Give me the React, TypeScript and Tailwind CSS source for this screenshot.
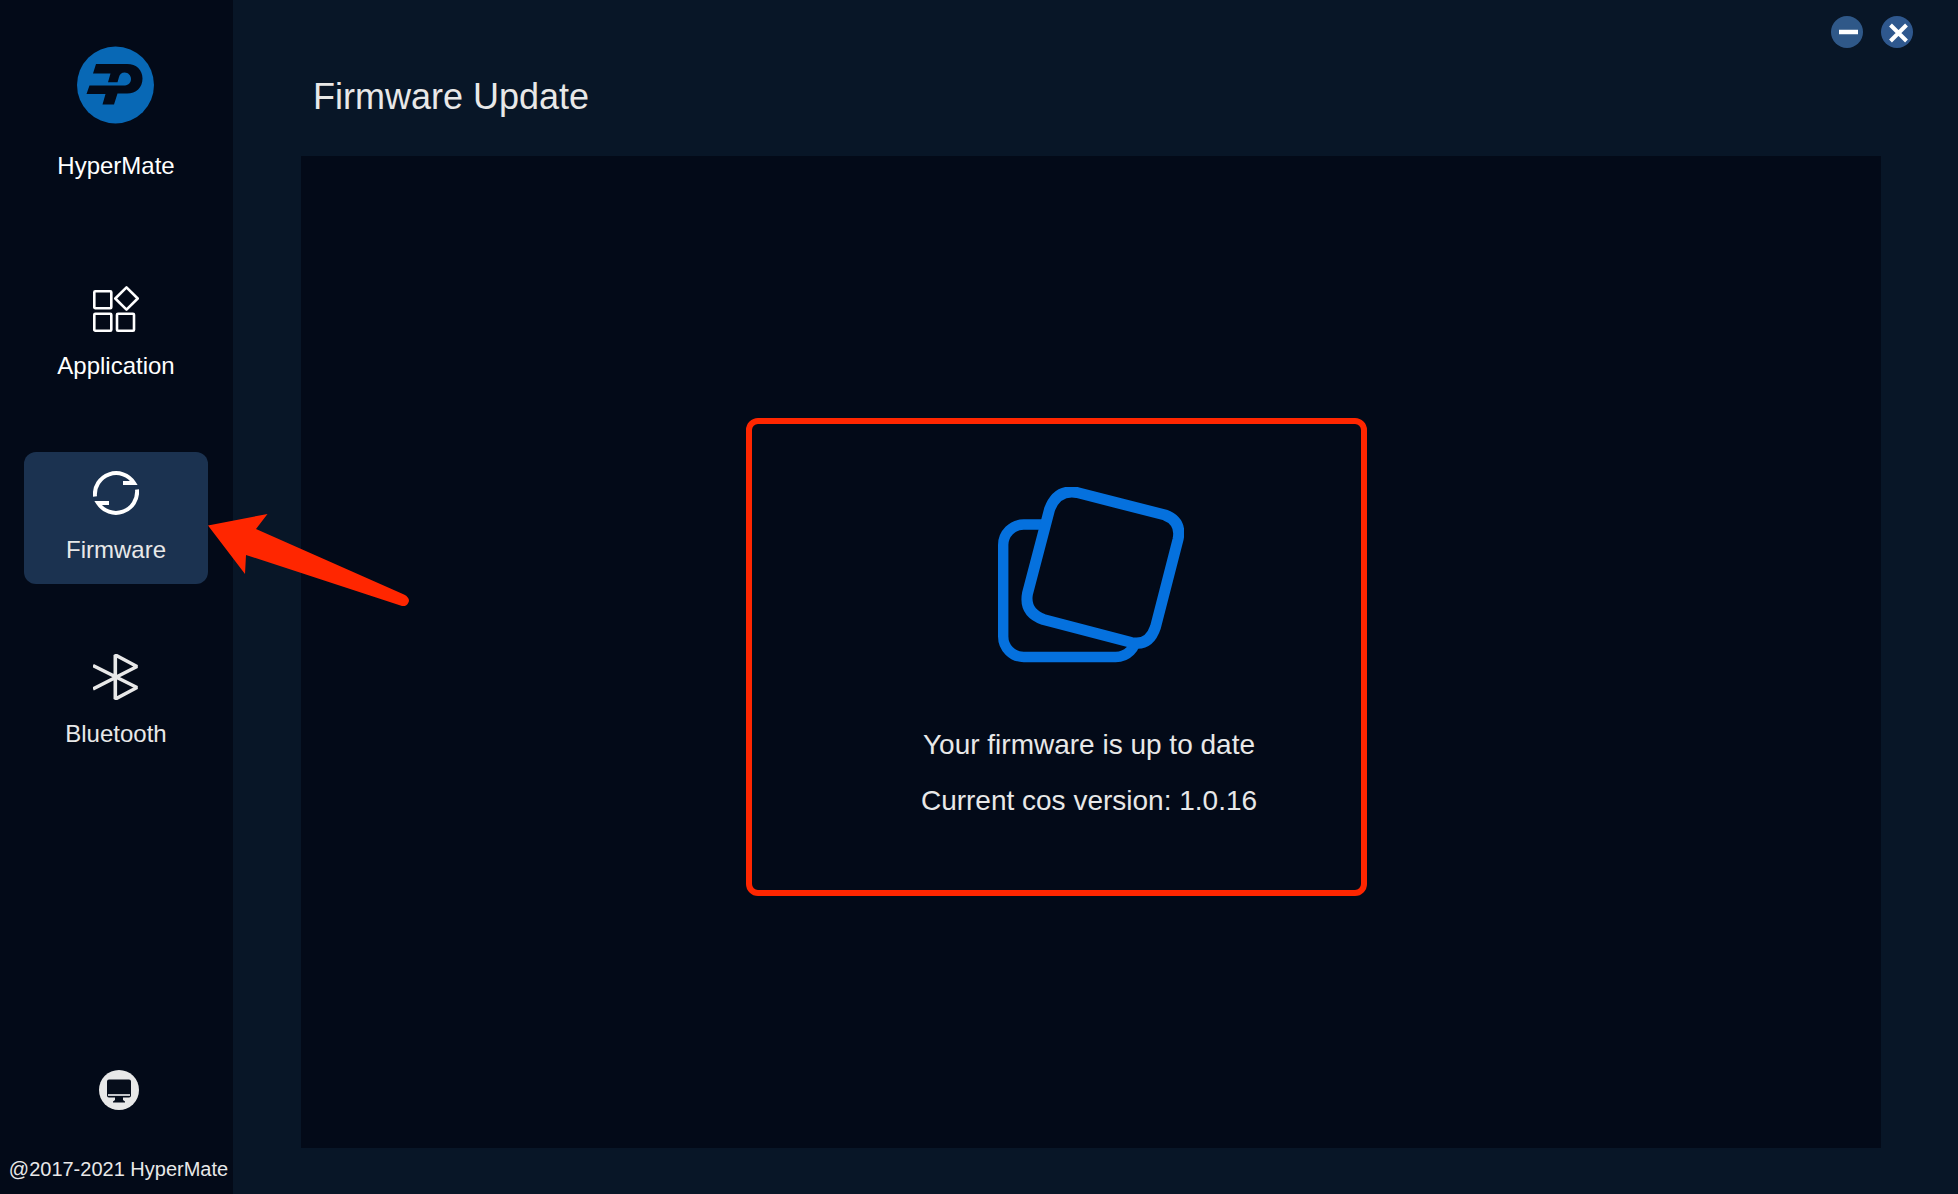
import React from 'react';
import { clsx } from 'clsx';

const LogoIcon: React.FC = () => (
  <svg className="h-[78px] w-[78px]" viewBox="0 0 78 78" aria-hidden="true">
    <circle cx="38.5" cy="39" r="38.5" fill="#0868b5" />
    <path
      d="M19 18H50C59.500 18 65.500 24 65.500 32.5C65.500 41.5 59 47.5 50 47.500H40.5L37 58.5H25.5L28.5 48H9.5L12.5 39.500H48C51.500 39 54 36.500 54 33C54 29.500 51 26.600 47.800 26.600C44.500 26.600 42.600 28.500 42 31L40.500 36.200H31L33.500 27.500H16Z"
      fill="#030a18"
    />
  </svg>
);

const ApplicationIcon: React.FC = () => (
  <svg className="h-[46px] w-[46px]" viewBox="0 0 46 46" fill="none" stroke="#fff" strokeWidth="2.600" aria-hidden="true">
    <rect x="1.300" y="5.200" width="17" height="17" rx="1" />
    <rect x="1.300" y="27.700" width="17" height="17" rx="1" />
    <rect x="24" y="27.700" width="17" height="17" rx="1" />
    <path d="M33.500 1.400L44.700 12.500L33.500 23.600L22.300 12.500Z" strokeLinejoin="round" />
  </svg>
);

const FirmwareIcon: React.FC = () => (
  <svg className="h-[46px] w-[46px]" viewBox="0 0 46 46" fill="none" stroke="#fff" strokeWidth="4" aria-hidden="true">
    <path d="M2 26.500A21.200 21.200 0 0 1 41 13H30" />
    <path d="M44 19.500A21.200 21.200 0 0 1 5 33H16" />
  </svg>
);

const BluetoothIcon: React.FC = () => (
  <svg className="h-[46px] w-[46px]" viewBox="0 0 46 46" fill="none" stroke="#e8e8e8" strokeWidth="3.600" aria-hidden="true">
    <path d="M0 35L44 12.500L22.300 1V45L44 33.500L0 11.500" strokeLinejoin="bevel" />
  </svg>
);

const MonitorIcon: React.FC = () => (
  <svg className="h-10 w-10" viewBox="0 0 40 40" aria-hidden="true">
    <circle cx="20" cy="20" r="20" fill="#e8e8e8" />
    <path d="M10 9.500H30Q32 9.500 32 11.500V25.500Q32 27.500 30 27.500H24V30L26 31.500V32.500H14V31.500L16 30V27.500H10Q8 27.500 8 25.500V11.500Q8 9.500 10 9.500Z" fill="#060d1b" />
    <path d="M9 25H31" stroke="#c4c6ca" strokeWidth="2" />
  </svg>
);

const FirmwareStatusIcon: React.FC = () => (
  <svg className="h-[176px] w-[186px]" viewBox="0 0 186 176" fill="none" stroke="#0571de" aria-hidden="true">
    <rect x="5.200" y="37.500" width="133" height="132.500" rx="20.500" strokeWidth="10.400" />
    <path
      d="M79 5.500L167 28Q184 34.500 180 52.500L157.500 140Q151 159.500 133.500 155.500L45.500 132.500Q26 125.500 29.500 106.500L51.500 22.500Q59 2 79 5.500Z"
      fill="#030a18"
      strokeWidth="11"
    />
  </svg>
);

// Points from the content area back to the selected menu entry
const Pointer: React.FC = () => (
  <svg
    className="pointer-events-none absolute left-full top-[62px] z-10 h-[92px] w-[202px]"
    viewBox="0 0 202 92"
    aria-hidden="true"
  >
    <path d="M0 11.500L59.500 0L48 15L196 80.500Q201 83 201 87Q199 93 194 92L38 41L37 60Z" fill="#ff2600" />
  </svg>
);

const menu = [
  { label: 'Application', icon: ApplicationIcon },
  { label: 'Firmware', icon: FirmwareIcon },
  { label: 'Bluetooth', icon: BluetoothIcon },
];

const Sidebar: React.FC<{ active: string }> = ({ active }) => (
  <aside className="flex w-[233px] shrink-0 flex-col bg-[#030a18] pt-[46px] pb-[13px]">
    <div className="flex flex-col items-center gap-7 pr-px">
      <LogoIcon />
      <span className="text-2xl leading-7 text-white">HyperMate</span>
    </div>

    <nav className="mt-[88px] flex flex-col gap-[52px] pr-[25px] pl-6">
      {menu.map(({ label, icon: Icon }) => (
        <div key={label} className="relative">
          <button
            type="button"
            className={clsx(
              'flex w-full flex-col items-center gap-5 rounded-xl pt-[18px] pb-5',
              active === label && 'bg-[#1b3250]'
            )}
          >
            <Icon />
            <span className={clsx('text-2xl leading-7', label === 'Application' ? 'text-white' : 'text-[#e8e8e8]')}>
              {label}
            </span>
          </button>
          {active === label && <Pointer />}
        </div>
      ))}
    </nav>

    <footer className="mt-auto flex flex-col items-center gap-[47px] pl-1">
      <button type="button" aria-label="Desktop">
        <MonitorIcon />
      </button>
      <span className="text-xl leading-6 whitespace-nowrap text-[#e8e8e8]">@2017-2021 HyperMate</span>
    </footer>
  </aside>
);

const WindowControls: React.FC = () => (
  <div className="flex justify-end gap-[18px] pr-[45px]">
    <button type="button" aria-label="Minimize">
      <svg className="h-8 w-8" viewBox="0 0 32 32" aria-hidden="true">
        <circle cx="16" cy="16" r="16" fill="#2f5888" />
        <path d="M8 16H27" stroke="#fff" strokeWidth="4.500" />
      </svg>
    </button>
    <button type="button" aria-label="Close">
      <svg className="h-8 w-8" viewBox="0 0 32 32" aria-hidden="true">
        <circle cx="16" cy="16" r="16" fill="#2f588e" />
        <path d="M9.500 9L25.500 25M25.500 9L9.500 25" stroke="#fff" strokeWidth="4" />
      </svg>
    </button>
  </div>
);

export default function App() {
  return (
    <div className="flex min-h-screen bg-[#081627] font-['Liberation_Sans',Arial,sans-serif]">
      <Sidebar active="Firmware" />

      <div className="flex min-w-0 flex-1 flex-col pt-4 pb-[46px]">
        <WindowControls />

        <main className="flex flex-1 flex-col pt-[29px] pr-[77px] pl-[68px]">
          <h1 className="pl-3 text-4xl leading-10 text-[#e8e8e8]">Firmware Update</h1>

          <section className="mt-[39px] flex flex-1 items-center justify-center bg-[#030a18]">
            <div className="relative flex flex-col items-center gap-[66px]">
              <FirmwareStatusIcon />
              <div className="flex flex-col items-center gap-6 pr-1 text-[28px] leading-8 text-[#e8e8e8]">
                <p>Your firmware is up to date</p>
                <p>Current cos version: 1.0.16</p>
              </div>
              <div className="pointer-events-none absolute -top-[69px] -right-[106px] -bottom-[79px] -left-[175px] rounded-xl border-6 border-[#ff2600]" />
            </div>
          </section>
        </main>
      </div>
    </div>
  );
}
